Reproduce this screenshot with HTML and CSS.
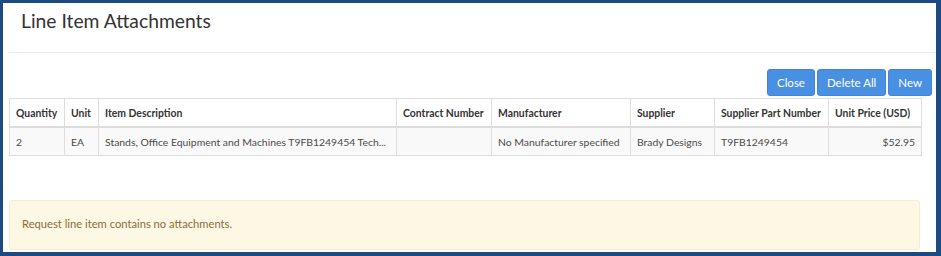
FILE: index.html
```html
<!DOCTYPE html>
<html>
<head>
  <meta charset="UTF-8">
  <link rel="stylesheet" href="styles.css">
</head>
<body>
  <div class="modal">
    <div class="modal-header">
      <h1 class="modal-title">Line Item Attachments</h1>
    </div>
    <div class="modal-body">
      <div class="toolbar">
        <button class="btn">Close</button>
        <button class="btn">Delete All</button>
        <button class="btn">New</button>
      </div>
      <table class="items">
        <colgroup>
          <col class="c-qty">
          <col class="c-unit">
          <col class="c-desc">
          <col class="c-contract">
          <col class="c-mfr">
          <col class="c-sup">
          <col class="c-part">
          <col class="c-price">
        </colgroup>
        <thead>
          <tr>
            <th>Quantity</th>
            <th>Unit</th>
            <th>Item Description</th>
            <th>Contract Number</th>
            <th>Manufacturer</th>
            <th>Supplier</th>
            <th>Supplier Part Number</th>
            <th>Unit Price (USD)</th>
          </tr>
        </thead>
        <tbody>
          <tr>
            <td>2</td>
            <td>EA</td>
            <td>Stands, Office Equipment and Machines T9FB1249454 Tech...</td>
            <td></td>
            <td>No Manufacturer specified</td>
            <td>Brady Designs</td>
            <td>T9FB1249454</td>
            <td class="money">$52.95</td>
          </tr>
        </tbody>
      </table>
      <div class="alert">Request line item contains no attachments.</div>
    </div>
  </div>
</body>
</html>
```

FILE: styles.css
```css
html, body{
  margin: 0;
  padding: 0;
  background-color: #1d4a80;
}
body{
  font-family: Lato, "Liberation Sans", sans-serif;
  color: #333;
  width: 941px;
  height: 256px;
  box-sizing: border-box;
  padding: 3px 5px 4px 3px;
}
.modal{
  background-color: white;
  height: 249px;
  overflow: hidden;
}
.modal-header{
  margin-left: 5px;
  border-bottom: 1px solid #eeeeee;
  box-sizing: border-box;
  height: 50px;
}
.modal-title{
  margin: 0;
  padding: 5px 0 0 13px;
  font-size: 19.3px;
  font-weight: normal;
  line-height: 26px;
  color: #333;
}
.modal-body{
  padding: 16px 0 0 6px;
}
.toolbar{
  display: flex;
  justify-content: flex-end;
  gap: 2px;
  padding-right: 4px;
  margin-bottom: 2px;
}
.btn{
  font-family: Lato, "Liberation Sans", sans-serif;
  font-size: 11.5px;
  color: white;
  background-color: #4a90e2;
  border: 1px solid #3f86d8;
  border-radius: 3px;
  height: 27px;
  padding: 0 9px;
  cursor: pointer;
}
.items{
  width: 912px;
  table-layout: fixed;
  border-collapse: collapse;
  font-size: 10.4px;
  border: 1px solid #dddddd;
}
.items th, .items td{
  border: 1px solid #dddddd;
  padding: 0 6px;
  height: 27px;
  text-align: left;
  white-space: nowrap;
  overflow: hidden;
}
.items th{
  font-weight: bold;
  color: #333;
  border-bottom-width: 2px;
}
.items td{
  background-color: #f9f9f9;
  color: #4a4a4a;
}
.items .money{
  text-align: right;
}
.c-qty{ width: 55px; }
.c-unit{ width: 34px; }
.c-desc{ width: 298px; }
.c-contract{ width: 95px; }
.c-mfr{ width: 139px; }
.c-sup{ width: 84px; }
.c-part{ width: 114px; }
.c-price{ width: 93px; }
.alert{
  margin-top: 44px;
  width: 911px;
  height: 50px;
  box-sizing: border-box;
  background-color: #fcf8e3;
  border: 1px solid #faebcc;
  border-radius: 3px;
  color: #8a6d3b;
  font-size: 11.2px;
  padding: 16px 12px;
}
```
